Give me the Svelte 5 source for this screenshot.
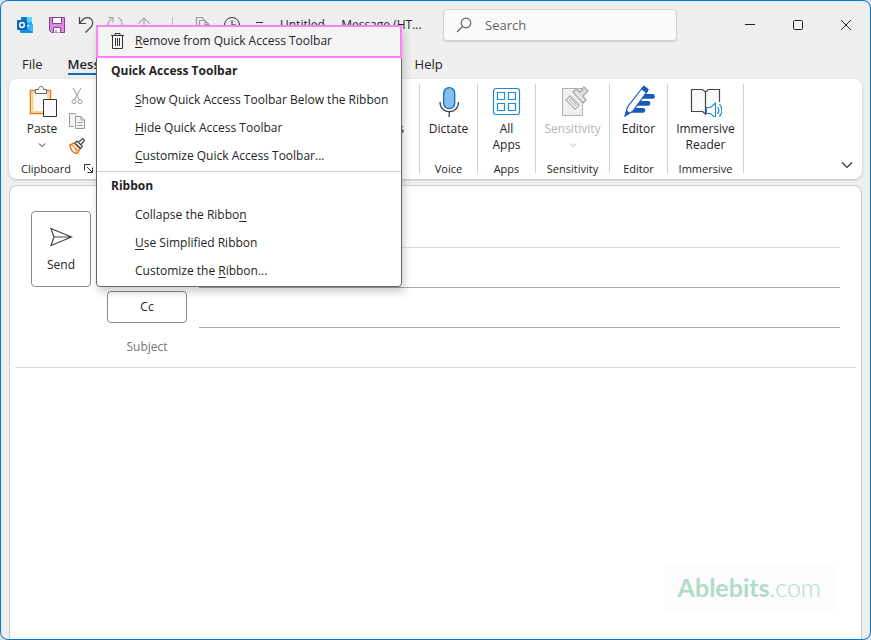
<script lang="ts">
  type MenuItem = { before: string; key: string; after: string };

  let search = $state("");
  let to = $state("");
  let cc = $state("");
  let from = $state("");
  let subject = $state("");

  const toolbarItems: MenuItem[] = [
    { before: "", key: "S", after: "how Quick Access Toolbar Below the Ribbon" },
    { before: "", key: "H", after: "ide Quick Access Toolbar" },
    { before: "", key: "C", after: "ustomize Quick Access Toolbar..." },
  ];

  const ribbonItems: MenuItem[] = [
    { before: "Collapse the Ribbo", key: "n", after: "" },
    { before: "", key: "U", after: "se Simplified Ribbon" },
    { before: "Customize the ", key: "R", after: "ibbon..." },
  ];
</script>

{#snippet menuItem(item: MenuItem)}
  <button class="menu-item" role="menuitem">{item.before}<u>{item.key}</u>{item.after}</button>
{/snippet}

<div class="window">
  <header class="titlebar">
    <div class="quick-access">
      <svg class="icon" viewBox="0 0 16 16" aria-label="Outlook">
        <path d="M4 0h11v8H4z" fill="#28a8ea" />
        <path d="M4 0h6v5H4z" fill="#0f78d4" />
        <path d="M10 0h5v5h-5z" fill="#50d9ff" />
        <path d="M3 8l6 3 7-4v8.500l-1 .5H4l-1-1z" fill="#1490df" />
        <path d="M16 7v8L8 10.500z" fill="#35b8f1" />
        <rect y="3" width="10" height="10" rx="1" fill="#0f64b5" />
        <ellipse cx="5" cy="8" rx="2.300" ry="2.500" fill="none" stroke="#fff" stroke-width="1.400" />
      </svg>
      <button class="tool" aria-label="Save">
        <svg class="icon" viewBox="0 0 16 16">
          <path d="M.5.5h15v15h-13l-2-2z" fill="#d78fdc" stroke="#8f3a99" />
          <path d="M3.500.5h9v6h-9zM4.500 15.500v-5h7v5" fill="#fff" stroke="#8f3a99" />
          <path d="M7 13v2.500" stroke="#8f3a99" />
        </svg>
      </button>
      <button class="tool" aria-label="Undo">
        <svg class="icon" viewBox="0 0 16 16" fill="none" stroke="#444" stroke-width="1.200">
          <path d="M1.500 0v6.500h6.500M2 6C5 1.500 9-.5 12.500 1.500c3.500 3 2.500 6.500 0 9l-5 5" />
        </svg>
      </button>
      <button class="tool" aria-label="Redo">
        <svg class="icon" viewBox="0 0 16 16" fill="none" stroke="#aaa" stroke-width="1.200">
          <path d="M1 .5h5v5M6 1C-1 4 0 12 5 14.500M11 .5c6 3 5 12-1 14" />
        </svg>
      </button>
      <button class="tool" aria-label="Previous item">
        <svg class="icon" viewBox="0 0 16 16" fill="none" stroke="#aaa" stroke-width="1.200">
          <path d="M8 16V1M2.500 6.500L8 1l5.500 5.500" />
        </svg>
      </button>
      <span class="tool-divider"></span>
      <button class="tool" aria-label="Copy">
        <svg class="icon" viewBox="0 0 16 16" fill="none" stroke="#999" stroke-width="1.200">
          <path d="M4 12H1.500V.5H7l2 2M4.500 3.500H10l4 4v8H4.500zM10 3.500v4h4" />
        </svg>
      </button>
      <button class="tool" aria-label="Delay delivery">
        <svg class="icon" viewBox="0 0 16 16" fill="none" stroke="#333">
          <circle cx="8" cy="8" r="7.500" />
          <path d="M8 3v5h4" />
        </svg>
      </button>
      <button class="tool" aria-label="Customize Quick Access Toolbar">
        <svg class="icon" viewBox="0 0 16 16" fill="none" stroke="#333">
          <path d="M3 5.500h7M4 9l2.500 2.500L9 9" />
        </svg>
      </button>
    </div>
    <div class="title">Untitled &nbsp;- &nbsp;Message (HT...</div>
    <label class="search">
      <svg class="icon" viewBox="0 0 16 16" fill="none" stroke="#666" stroke-width="1.200">
        <circle cx="10" cy="6" r="4.800" />
        <path d="M6.500 9.500L1 15" />
      </svg>
      <input type="text" placeholder="Search" aria-label="Search" bind:value={search} />
    </label>
    <div class="window-buttons">
      <button aria-label="Minimize">
        <svg viewBox="0 0 12 12"><path d="M1 5.500h10" /></svg>
      </button>
      <button aria-label="Maximize">
        <svg viewBox="0 0 12 12"><rect x="1.500" y="1.500" width="9" height="9" rx="1" /></svg>
      </button>
      <button aria-label="Close">
        <svg viewBox="0 0 12 12"><path d="M1 1l10 10M11 1L1 11" /></svg>
      </button>
    </div>
  </header>

  <nav class="tabs">
    <button class="tab">File</button>
    <button class="tab active">Message</button>
    <button class="tab help">Help</button>
  </nav>

  <section class="ribbon">
    <div class="group clipboard">
      <div class="clipboard-tools">
        <button class="command paste">
          <svg class="large" viewBox="-2 0 32 32">
            <path d="M2.500 5.500h20v23h-20z" fill="#fff" stroke="#e07b16" stroke-width="1.500" />
            <path d="M4.500 7h16v20h-16z" fill="#fafafa" stroke="#f6d58e" stroke-width="2" />
            <path d="M7.500 8.500v-4h3c0-4 5-4 5 0h3v4z" fill="#fff" stroke="#666" />
            <path d="M15.500 14.500h13v17h-13z" fill="#fafafa" stroke="#333" />
          </svg>
          <span>Paste</span>
          <svg class="caret" viewBox="0 0 8 6"><path d="M1 1.500l3 3 3-3" /></svg>
        </button>
        <div class="small-tools">
          <button aria-label="Cut">
            <svg class="icon" viewBox="0 0 16 16" fill="none" stroke="#999">
              <path d="M4 0l6.500 11.500M12 0L5.500 11.500" />
              <circle cx="5" cy="13.500" r="2" />
              <circle cx="11" cy="13.500" r="2" />
            </svg>
          </button>
          <button aria-label="Copy">
            <svg class="icon" viewBox="0 0 16 16" fill="#f2f2f2" stroke="#999">
              <path d="M5 13.500H.5V.5H6l2 2" />
              <path d="M6.500 3.500H12l3.500 3.500v8.500h-9zM12 3.500V7h3.500M8.500 9.500h5M8.500 12.500h5" />
            </svg>
          </button>
          <button aria-label="Format Painter">
            <svg class="icon" viewBox="0 0 16 16">
              <path d="M1 7l4-2 6 6-3 4.500C4 15 1.500 12 1 7z" fill="#fff" stroke="#e57316" stroke-width="1.400" />
              <path d="M2 8l3 1 2 5 2-2-5-5z" fill="#f4882b" />
              <path d="M6 5l2-2 5.500 5.500-2 2zM9.500 4L14 .5l1.500 2L12 6.500" fill="#fff" stroke="#444" stroke-width="1.200" />
            </svg>
          </button>
        </div>
      </div>
      <div class="group-label">
        Clipboard
        <button class="launcher" aria-label="Clipboard settings">
          <svg viewBox="0 0 9 9" fill="none" stroke="#333">
            <path d="M.5 6.500v-6h6M3 3l5 5M8.500 3.500v5h-5" />
          </svg>
        </button>
      </div>
    </div>
    <div class="group tags">
      <button class="command"><span>Tags</span></button>
    </div>
    <div class="group">
      <button class="command">
        <svg class="large" viewBox="0 0 32 32" fill="none">
          <rect x="10.700" y="2.700" width="11" height="21" rx="5.500" fill="#83beec" stroke="#0f6cbd" stroke-width="1.300" />
          <path d="M7 17c0 13 18.500 13 18.500 0M16.200 27v5" stroke="#444" stroke-width="1.300" />
        </svg>
        <span>Dictate</span>
      </button>
      <div class="group-label">Voice</div>
    </div>
    <div class="group">
      <button class="command">
        <svg class="large" viewBox="0 0 32 32" fill="none" stroke="#2089d0" stroke-width="1.200">
          <rect x="2.500" y="3.500" width="26" height="26" rx="2.500" />
          <path d="M6.500 7.500h7v7h-7zM17.500 7.500h7v7h-7zM6.500 18.500h7v7h-7zM17.500 18.500h7v7h-7z" />
        </svg>
        <span>All<br />Apps</span>
      </button>
      <div class="group-label">Apps</div>
    </div>
    <div class="group medium">
      <button class="command" disabled>
        <svg class="large" viewBox="0 0 32 32" fill="#efefef" stroke="#b0b0b0">
          <path d="M5.500 3.500h20v27h-20z" />
          <path d="M9 15l4-4 9 9-4 4z" fill="#fff" stroke-width="1.300" />
          <path d="M12 15l1.500-1.500 6 6L18 21z" />
          <path d="M16 7l3-3 4 3 4-5 4 4-5 5 3 4-3 3z" fill="#ddd" stroke="#aaa" stroke-width="1.300" />
          <path d="M18.500 8l8 8" stroke="#fff" />
        </svg>
        <span>Sensitivity</span>
        <svg class="caret" viewBox="0 0 8 6"><path d="M1 1.500l3 3 3-3" /></svg>
      </button>
      <div class="group-label">Sensitivity</div>
    </div>
    <div class="group">
      <button class="command">
        <svg class="large" viewBox="0 0 32 32">
          <path d="M20 9h9.500a2.400 2.400 0 010 4.800H17zM17 16h8a2.400 2.400 0 010 4.800H13zM12 23h8a2.400 2.400 0 010 4.800H8z" fill="#185abd" />
          <path d="M2 31l2.500-9L20 2l4.500 4L10 26z" fill="#fff" stroke="#185abd" stroke-width="1.200" />
          <path d="M18 4l3-3.500 5 4L23 8zM2 31l1.500-6 3.500 3z" fill="#185abd" />
        </svg>
        <span>Editor</span>
      </button>
      <div class="group-label">Editor</div>
    </div>
    <div class="group wide">
      <button class="command">
        <svg class="large" viewBox="0 0 32 32" fill="#fafafa" stroke="#444" stroke-width="1.200">
          <path d="M1.500 4.500h11l3 2.500v22l-3-2.500h-11zM15.500 7l3-2.500h11v22h-11l-3 2.500z" />
          <path d="M23 17h9v15h-8z" fill="#fff" stroke="none" />
          <path d="M16.500 22.500h4l5-4.500v15l-5-4.500h-4z" fill="#fff" stroke="#1e8bcd" />
          <path d="M27.500 22c1.500 2 1.500 5 0 7M29.500 19c3 4 3 9 0 12.500" fill="none" stroke="#1e8bcd" />
        </svg>
        <span>Immersive<br />Reader</span>
      </button>
      <div class="group-label">Immersive</div>
    </div>
    <button class="collapse" aria-label="Ribbon display options">
      <svg viewBox="0 0 12 8"><path d="M1 1.500l5 5 5-5" /></svg>
    </button>
  </section>

  <main class="message">
    <div class="recipients">
      <button class="send">
        <svg viewBox="0 0 24 24" fill="none" stroke="#444" stroke-width="1.200">
          <path d="M2 3.500L22.500 12 2 20.500 5 12zM5 12h17" />
        </svg>
        Send
      </button>
      <div class="fields">
        <div class="field light">
          <span></span>
          <input type="text" aria-label="From" bind:value={from} />
        </div>
        <div class="field">
          <span></span>
          <input type="text" aria-label="To" bind:value={to} />
        </div>
        <div class="field">
          <button class="cc">Cc</button>
          <input type="text" aria-label="Cc" bind:value={cc} />
        </div>
      </div>
    </div>
    <div class="subject">
      <label for="subject">Subject</label>
      <input id="subject" type="text" bind:value={subject} />
    </div>
    <div class="watermark"><b>Ablebits</b>.com</div>
  </main>

  <div class="menu" role="menu">
    <button class="menu-item highlighted" role="menuitem">
      <svg class="icon" viewBox="0 0 16 16" fill="none" stroke="#333">
        <path d="M2 2.500h13M6 2.500v-2h5v2M3.500 2.500v13h10v-13M6.500 5v8M8.500 5v8M10.500 5v8" />
      </svg>
      <span><u>R</u>emove from Quick Access Toolbar</span>
    </button>
    <div class="menu-heading">Quick Access Toolbar</div>
    {#each toolbarItems as item}
      {@render menuItem(item)}
    {/each}
    <hr />
    <div class="menu-heading">Ribbon</div>
    {#each ribbonItems as item}
      {@render menuItem(item)}
    {/each}
  </div>
</div>

<style>
  :global(body) {
    background: #dcdcdc;
  }

  .window,
  .window * {
    box-sizing: border-box;
  }

  .window {
    position: relative;
    display: flex;
    flex-direction: column;
    min-height: 100vh;
    overflow: hidden;
    border: 1px solid #0078d4;
    border-radius: 8px;
    background: #efefef;
    color: #242424;
    font: 12px/16px "Segoe UI", "Open Sans", sans-serif;
  }

  button,
  input {
    padding: 0;
    border: 0;
    background: none;
    color: inherit;
    font: inherit;
  }

  input {
    min-width: 0;
    outline: none;
  }

  svg {
    display: block;
    flex: none;
  }

  .icon {
    width: 16px;
    height: 16px;
  }

  .titlebar {
    display: flex;
    align-items: center;
    height: 48px;
    padding-left: 16px;
  }

  .quick-access {
    display: flex;
    flex: none;
    align-items: center;
    gap: 13px;
    width: 263px;
  }

  .quick-access > .icon {
    margin-right: 3px;
  }

  .tool-divider {
    width: 1px;
    height: 16px;
    margin: 0 9px 0 7px;
    background: #bbb;
  }

  .title {
    flex: none;
    width: 163px;
    white-space: nowrap;
  }

  .search {
    display: flex;
    flex: 0 1 234px;
    align-items: center;
    gap: 13px;
    height: 32px;
    padding: 0 12px;
    border: 1px solid #d4d4d4;
    border-radius: 4px;
    background: #fafafa;
    box-shadow: 0 1px 1px #ccc;
  }

  .search input {
    flex: 1;
    font-size: 13px;
  }

  .search input::placeholder {
    color: #666;
    opacity: 1;
  }

  .window-buttons {
    display: flex;
    margin-left: auto;
  }

  .window-buttons button {
    display: grid;
    place-items: center;
    width: 48px;
    height: 32px;
  }

  .window-buttons svg {
    width: 12px;
    height: 12px;
    fill: none;
    stroke: #222;
  }

  .tabs {
    display: flex;
    align-items: center;
    gap: 25px;
    height: 30px;
    padding-left: 21px;
    font-size: 13px;
  }

  .tab {
    height: 22px;
    padding-top: 2px;
    border-bottom: 2px solid transparent;
  }

  .tab.active {
    width: 56px;
    border-color: #0f6cbd;
    font-weight: 600;
    text-align: left;
    white-space: nowrap;
  }

  .tab.help {
    margin-left: 266px;
  }

  .ribbon {
    display: flex;
    height: 100px;
    margin: 0 8px;
    padding: 5px 0 2px;
    border-radius: 8px;
    background: #fff;
    box-shadow: 0 1px 3px #bbb;
  }

  .group {
    display: flex;
    flex: none;
    flex-direction: column;
    justify-content: space-between;
    width: 58px;
    height: 89px;
    border-right: 1px solid #d0d0d0;
    text-align: center;
  }

  .group.medium {
    width: 74px;
  }

  .group.wide {
    width: 76px;
  }

  .group.clipboard {
    width: 90px;
    padding-left: 12px;
    text-align: left;
  }

  .group.tags {
    width: 321px;
    padding: 37px 15px 0 0;
    align-items: flex-end;
    justify-content: flex-start;
  }

  .command {
    display: flex;
    flex-direction: column;
    align-items: center;
    width: 100%;
    padding-top: 1px;
  }

  .tags .command {
    width: auto;
    padding: 0;
  }

  .command span {
    margin-top: 4px;
  }

  .tags .command span {
    margin: 0;
  }

  .command:disabled {
    color: #b5b5b5;
  }

  .large {
    width: 32px;
    height: 32px;
  }

  .caret {
    width: 8px;
    height: 6px;
    margin-top: 5px;
    fill: none;
    stroke: currentColor;
  }

  .group-label {
    display: flex;
    justify-content: center;
    font-size: 11px;
    line-height: 8px;
    white-space: nowrap;
  }

  .clipboard .group-label {
    align-items: center;
    justify-content: flex-start;
    gap: 13px;
  }

  .clipboard-tools {
    display: flex;
    gap: 6px;
  }

  .paste {
    width: 42px;
  }

  .small-tools {
    display: flex;
    flex-direction: column;
    gap: 9px;
    padding-top: 4px;
  }

  .launcher svg {
    width: 9px;
    height: 9px;
  }

  .collapse {
    align-self: flex-end;
    margin: 0 9px 8px auto;
  }

  .collapse svg {
    width: 12px;
    height: 8px;
    fill: none;
    stroke: #333;
    stroke-width: 1.2;
  }

  .message {
    display: flex;
    flex: 1;
    flex-direction: column;
    margin: 6px 8px 0;
    padding-top: 22px;
    border: 1px solid #ccc;
    border-bottom: 0;
    border-radius: 8px 8px 0 0;
    background: #fff;
  }

  .recipients {
    display: flex;
    gap: 16px;
    padding: 0 21px;
  }

  .send {
    display: flex;
    flex-direction: column;
    align-items: center;
    gap: 8px;
    width: 60px;
    height: 76px;
    margin-top: 3px;
    padding-top: 13px;
    border: 1px solid #8a8a8a;
    border-radius: 4px;
  }

  .send svg {
    width: 24px;
    height: 24px;
  }

  .fields {
    flex: 1;
  }

  .field,
  .subject {
    display: grid;
    grid-template-columns: 80px 1fr;
    gap: 12px;
    align-items: center;
    height: 40px;
  }

  .field input {
    height: 40px;
    border-bottom: 1px solid #a8a8a8;
  }

  .field.light input {
    border-color: #ddd;
  }

  .cc {
    height: 32px;
    margin-bottom: 2px;
    border: 1px solid #8a8a8a;
    border-radius: 4px;
  }

  .subject {
    margin: 0 5px;
    padding: 0 0 2px 92px;
    border-bottom: 1px solid #ddd;
  }

  .subject label {
    color: #777;
    text-align: center;
  }

  .watermark {
    align-self: flex-end;
    margin: auto 26px 28px 0;
    padding: 8px 14px;
    border-radius: 4px;
    background: #fcfcfc;
    color: #b0dcc7;
    font: 300 25px/32px Lato, sans-serif;
  }

  .watermark b {
    font-weight: 700;
  }

  .menu {
    position: absolute;
    top: 24px;
    left: 95px;
    width: 306px;
    padding-bottom: 1px;
    border: 1px solid #666;
    border-radius: 4px;
    background: #fff;
    box-shadow: 2px 5px 8px rgba(0, 0, 0, 0.2);
  }

  .menu-item {
    display: block;
    width: 100%;
    height: 28px;
    padding-left: 38px;
    text-align: left;
    white-space: pre;
  }

  .menu-item u {
    text-underline-offset: 2px;
  }

  .menu-item.highlighted {
    display: flex;
    align-items: center;
    gap: 10px;
    width: 306px;
    height: 33px;
    margin: -1px;
    padding: 0 0 1px 11px;
    border: 2px solid #ff80f7;
    background: #f4f4f4;
  }

  .menu-heading {
    padding: 6px 14px 7px;
    font-weight: 700;
  }

  hr {
    height: 1px;
    margin: 1px 0 0;
    border: 0;
    background: #d0d0d0;
  }
</style>
